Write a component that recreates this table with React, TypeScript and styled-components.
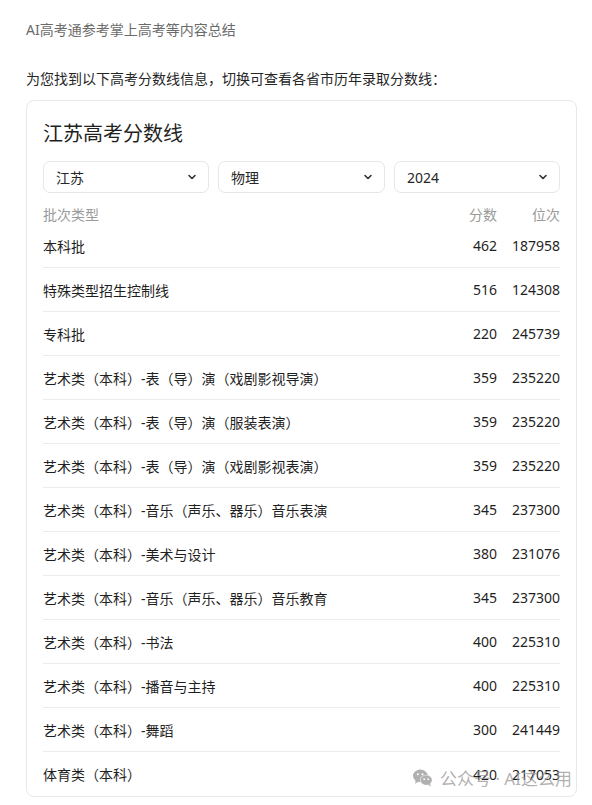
import React from "react";
import styled, { createGlobalStyle } from "styled-components";

const Global = createGlobalStyle`
  html, body { margin: 0; padding: 0; background: #fff; }
  body { font-family: "Noto Sans", "Noto Sans CJK SC", sans-serif; }
  * { box-sizing: border-box; }
`;

const Page = styled.div`
  position: relative;
  padding: 20px 15px 8px 26px;
  width: 592px;
`;

const Source = styled.div`
  font-size: 14px;
  line-height: 20px;
  color: #6b6b6b;
`;

const Intro = styled.div`
  margin-top: 29px;
  font-size: 14px;
  line-height: 20px;
  color: #262626;
`;

const Card = styled.div`
  margin-top: 11px;
  border: 1px solid #e8e8e8;
  border-radius: 8px;
  padding: 19px 16px 0 16px;
`;

const Title = styled.div`
  font-size: 20px;
  line-height: 28px;
  color: #1f1f1f;
`;

const Selects = styled.div`
  margin-top: 13px;
  display: grid;
  grid-template-columns: 166px 167px 166px;
  gap: 9px;
`;

const Select = styled.div`
  height: 32px;
  border: 1px solid #e6e6e6;
  border-radius: 7px;
  display: flex;
  align-items: center;
  justify-content: space-between;
  padding: 0 11px 0 12px;
  font-size: 14px;
  color: #262626;
`;

const HeaderRow = styled.div`
  margin-top: 11px;
  height: 20px;
  display: grid;
  grid-template-columns: 1fr 60px 63px;
  align-items: center;
  font-size: 14px;
  color: #9a9a9a;
`;

const Row = styled.div<{ $last?: boolean }>`
  height: 44px;
  display: grid;
  grid-template-columns: 1fr 60px 63px;
  align-items: center;
  font-size: 14px;
  color: #1f1f1f;
  border-bottom: ${(p) => (p.$last ? "none" : "1px solid #ececec")};
`;

const Num = styled.div`
  text-align: right;
`;

const Watermark = styled.div`
  position: absolute;
  right: 20px;
  bottom: 15px;
  display: flex;
  align-items: center;
  gap: 7px;
  font-size: 17px;
  color: rgba(150, 150, 150, 0.75);
  pointer-events: none;
`;

const Chevron = () => (
  <svg width="10" height="10" viewBox="0 0 10 10">
    <path d="M2 3.5 L5 6.5 L8 3.5" fill="none" stroke="#333" strokeWidth="1.6" strokeLinecap="round" strokeLinejoin="round" />
  </svg>
);

const WeChat = () => (
  <svg width="20" height="18" viewBox="0 0 19 17">
    <ellipse cx="7" cy="6.5" rx="7" ry="6" fill="rgba(150,150,150,0.75)" />
    <path d="M2.5 11 L2 14 L5 12 Z" fill="rgba(150,150,150,0.75)" />
    <ellipse cx="12.5" cy="10.5" rx="6" ry="5" fill="#fff" />
    <ellipse cx="12.5" cy="10.5" rx="5.5" ry="4.6" fill="rgba(150,150,150,0.75)" />
    <path d="M16 14 L17 16.5 L14 15 Z" fill="rgba(150,150,150,0.75)" />
    <circle cx="4.6" cy="5" r="1" fill="#fff" />
    <circle cx="9" cy="5" r="1" fill="#fff" />
    <circle cx="10.6" cy="9.6" r="0.8" fill="#fff" />
    <circle cx="14.4" cy="9.6" r="0.8" fill="#fff" />
  </svg>
);

const rows: [string, number, number][] = [
  ["本科批", 462, 187958],
  ["特殊类型招生控制线", 516, 124308],
  ["专科批", 220, 245739],
  ["艺术类（本科）-表（导）演（戏剧影视导演）", 359, 235220],
  ["艺术类（本科）-表（导）演（服装表演）", 359, 235220],
  ["艺术类（本科）-表（导）演（戏剧影视表演）", 359, 235220],
  ["艺术类（本科）-音乐（声乐、器乐）音乐表演", 345, 237300],
  ["艺术类（本科）-美术与设计", 380, 231076],
  ["艺术类（本科）-音乐（声乐、器乐）音乐教育", 345, 237300],
  ["艺术类（本科）-书法", 400, 225310],
  ["艺术类（本科）-播音与主持", 400, 225310],
  ["艺术类（本科）-舞蹈", 300, 241449],
  ["体育类（本科）", 420, 217053],
];

export default function App() {
  return (
    <>
      <Global />
      <Page>
        <Source>AI高考通参考掌上高考等内容总结</Source>
        <Intro>为您找到以下高考分数线信息，切换可查看各省市历年录取分数线：</Intro>
        <Card>
          <Title>江苏高考分数线</Title>
          <Selects>
            <Select>江苏<Chevron /></Select>
            <Select>物理<Chevron /></Select>
            <Select>2024<Chevron /></Select>
          </Selects>
          <HeaderRow>
            <div>批次类型</div>
            <Num>分数</Num>
            <Num>位次</Num>
          </HeaderRow>
          {rows.map(([name, score, rank], i) => (
            <Row key={i} $last={i === rows.length - 1}>
              <div>{name}</div>
              <Num>{score}</Num>
              <Num>{rank}</Num>
            </Row>
          ))}
        </Card>
        <Watermark>
          <WeChat />
          <span>公众号 · AI这么用</span>
        </Watermark>
      </Page>
    </>
  );
}
